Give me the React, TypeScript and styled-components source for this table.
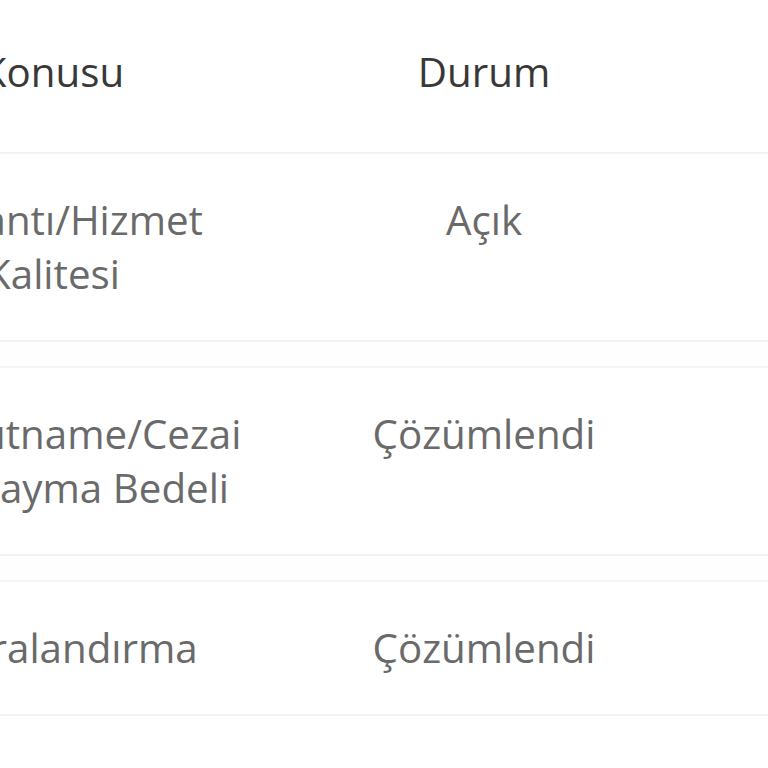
import React from "react";
import styled, { createGlobalStyle } from "styled-components";

const GlobalStyle = createGlobalStyle`
  html, body {
    margin: 0;
    padding: 0;
    background: #ffffff;
    overflow: hidden;
  }
  body {
    font-family: "Open Sans", "Liberation Sans", sans-serif;
  }
`;

const Table = styled.div`
  width: 1100px;
  margin-left: -193px;
  font-size: 40.3px;
  line-height: 54px;
`;

const Row = styled.div<{ $head?: boolean }>`
  display: grid;
  grid-template-columns: 492px 370px 1fr;
  padding: ${(p) => (p.$head ? "45px 0 53px" : "39px 0 39px")};
  border-bottom: 2px solid #f2f2f2;
  color: ${(p) => (p.$head ? "#383838" : "#6a6a6a")};
`;

const Spacer = styled.div`
  height: 24px;
  background: #fefefe;
  border-bottom: 2px solid #f4f4f4;
`;

const Cell = styled.div<{ $wide?: boolean }>`
  text-align: center;
  padding: ${(p) => (p.$wide ? "0 40px" : "0")};
`;

const rows = [
  { subject: "Bağlantı/Hizmet Kalitesi", status: "Açık" },
  { subject: "Taahhütname/Cezai İptal/Cayma Bedeli", status: "Çözümlendi" },
  { subject: "Faturalandırma", status: "Çözümlendi" },
];

export default function App() {
  return (
    <>
      <GlobalStyle />
      <Table>
        <Row $head>
          <Cell $wide>Konusu</Cell>
          <Cell>Durum</Cell>
          <Cell />
        </Row>
        {rows.map((r, i) => (
          <React.Fragment key={i}>
            {i > 0 && <Spacer />}
            <Row>
              <Cell $wide>{r.subject}</Cell>
              <Cell>{r.status}</Cell>
              <Cell />
            </Row>
          </React.Fragment>
        ))}
      </Table>
    </>
  );
}
